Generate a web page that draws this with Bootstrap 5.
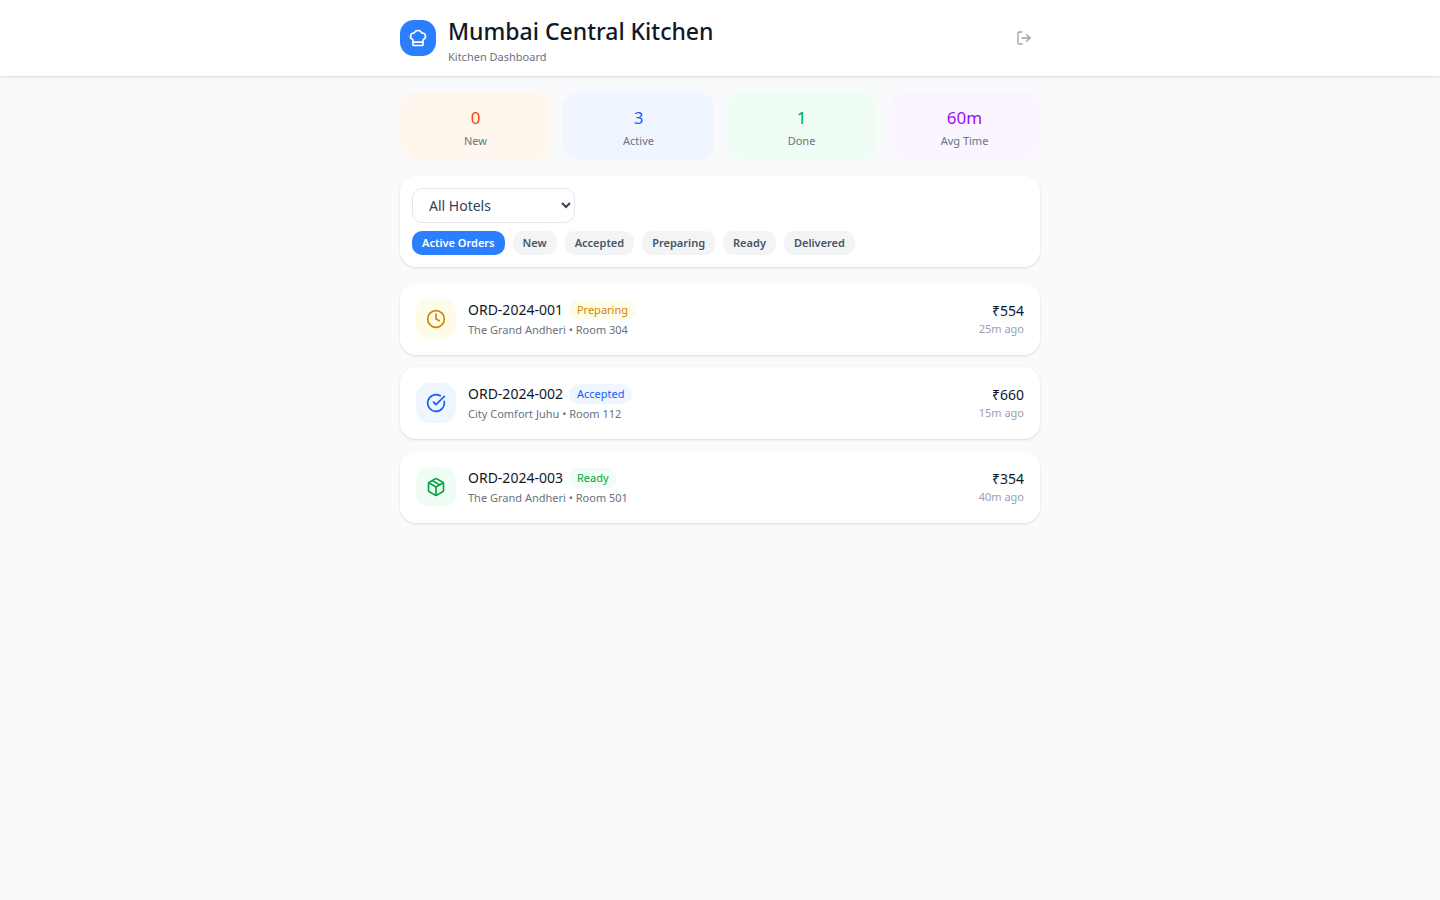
<!DOCTYPE html>
<html lang="en">
<head>
<meta charset="utf-8">
<meta name="viewport" content="width=device-width, initial-scale=1">
<title>Mumbai Central Kitchen</title>
<link href="https://cdn.jsdelivr.net/npm/bootstrap@5.3.0/dist/css/bootstrap.min.css" rel="stylesheet">
<style>
  body { background: #f9fafb; color: #101828; font-family: "Segoe UI", "Noto Sans", "Open Sans", sans-serif; font-size: 14px; line-height: 20px; }
  svg { fill: none; stroke: currentColor; stroke-width: 2; stroke-linecap: round; stroke-linejoin: round; display: block; }
  .wrap { max-width: 640px; }
  .soft-shadow { box-shadow: 0 1px 3px rgba(0,0,0,.1), 0 1px 2px -1px rgba(0,0,0,.1); }
  .top-row { padding: 11px 0; }
  .brand-tile { width: 36px; height: 36px; border-radius: 14px; background: #2b7fff; }
  .brand-text { padding-top: 2px; }
  .title { font-size: 23px; line-height: 36px; font-weight: 500; }
  .tiny { font-size: 11px; line-height: 16px; }
  .place { font-size: 11px; line-height: 16px; margin-top: 2px; }
  .muted { color: #6a7282; }
  .faint { color: #99a1af; }
  .gap-12 { gap: 12px; }
  .gap-6 { gap: 6px; }
  .pad-12 { padding: 12px; }
  .panel { background: #fff; border-radius: 16px; }
  .stat { border-radius: 16px; padding: 12px 12px 11px; }
  .stat-value { font-size: 17px; line-height: 28px; margin-bottom: 1px; }
  .orange { background: #fff7ed; color: #f54900; }
  .blue { background: #eff6ff; color: #155dfc; }
  .green { background: #f0fdf4; color: #00a63e; }
  .purple { background: #faf5ff; color: #9810fa; }
  .yellow { background: #fefce8; color: #d08700; }
  .hotel-select { width: 163px; height: 35px; padding: 0 0 0 12px; border: 1px solid #e5e7eb; border-radius: 10px; background: #fff; color: #364153; font-size: 14px; }
  .pill { border: 0; border-radius: 10px; padding: 4px 10px; font-size: 11px; line-height: 16px; font-weight: 600; background: #f3f4f6; color: #4a5565; }
  .pill.active { background: #2b7fff; color: #fff; }
  .order-tile { width: 40px; height: 40px; border-radius: 14px; }
  .status { border-radius: 10px; padding: 2px 8px; }
</style>
</head>
<body>
<header class="bg-white soft-shadow">
  <div class="wrap mx-auto d-flex align-items-center justify-content-between top-row">
    <div class="d-flex align-items-center gap-12">
      <div class="brand-tile d-flex align-items-center justify-content-center text-white">
        <svg width="20" height="20" viewBox="0 0 24 24"><path d="M17 21a1 1 0 0 0 1-1v-5.350c0-.457.316-.844.727-1.041a4 4 0 0 0-2.134-7.589 5 5 0 0 0-9.186 0 4 4 0 0 0-2.134 7.588c.411.198.727.585.727 1.041V20a1 1 0 0 0 1 1Z"/><path d="M6 17h12"/></svg>
      </div>
      <div class="brand-text">
        <h1 class="title mb-0">Mumbai Central Kitchen</h1>
        <p class="tiny muted mb-0">Kitchen Dashboard</p>
      </div>
    </div>
    <button type="button" class="btn border-0 p-2 faint" aria-label="Log out">
      <svg width="16" height="16" viewBox="0 0 24 24"><path d="m16 17 5-5-5-5"/><path d="M21 12H9"/><path d="M9 21H5a2 2 0 0 1-2-2V5a2 2 0 0 1 2-2h4"/></svg>
    </button>
  </div>
</header>

<main class="wrap mx-auto py-3 d-flex flex-column gap-3">
  <section class="d-flex gap-12 text-center">
    <div class="stat orange flex-fill w-25"><div class="stat-value">0</div><div class="tiny muted">New</div></div>
    <div class="stat blue flex-fill w-25"><div class="stat-value">3</div><div class="tiny muted">Active</div></div>
    <div class="stat green flex-fill w-25"><div class="stat-value">1</div><div class="tiny muted">Done</div></div>
    <div class="stat purple flex-fill w-25"><div class="stat-value">60m</div><div class="tiny muted">Avg Time</div></div>
  </section>

  <section class="panel soft-shadow pad-12 d-flex flex-column gap-2">
    <select class="hotel-select" aria-label="Hotel"><option>All Hotels</option><option>The Grand Andheri</option><option>City Comfort Juhu</option></select>
    <div class="d-flex flex-wrap gap-2">
      <button type="button" class="pill active">Active Orders</button>
      <button type="button" class="pill">New</button>
      <button type="button" class="pill">Accepted</button>
      <button type="button" class="pill">Preparing</button>
      <button type="button" class="pill">Ready</button>
      <button type="button" class="pill">Delivered</button>
    </div>
  </section>

  <section class="d-flex flex-column gap-12">
    <article class="panel soft-shadow p-3 d-flex align-items-center gap-12">
      <div class="order-tile yellow d-flex align-items-center justify-content-center">
        <svg width="20" height="20" viewBox="0 0 24 24"><circle cx="12" cy="12" r="10"/><path d="M12 6v6l4 2"/></svg>
      </div>
      <div class="flex-grow-1">
        <div class="d-flex align-items-center gap-6"><span>ORD-2024-001</span><span class="status tiny yellow">Preparing</span></div>
        <div class="place muted">The Grand Andheri • Room 304</div>
      </div>
      <div class="text-end"><div>₹554</div><div class="tiny faint">25m ago</div></div>
    </article>
    <article class="panel soft-shadow p-3 d-flex align-items-center gap-12">
      <div class="order-tile blue d-flex align-items-center justify-content-center">
        <svg width="20" height="20" viewBox="0 0 24 24"><path d="M21.801 10A10 10 0 1 1 17 3.335"/><path d="m9 11 3 3L22 4"/></svg>
      </div>
      <div class="flex-grow-1">
        <div class="d-flex align-items-center gap-6"><span>ORD-2024-002</span><span class="status tiny blue">Accepted</span></div>
        <div class="place muted">City Comfort Juhu • Room 112</div>
      </div>
      <div class="text-end"><div>₹660</div><div class="tiny faint">15m ago</div></div>
    </article>
    <article class="panel soft-shadow p-3 d-flex align-items-center gap-12">
      <div class="order-tile green d-flex align-items-center justify-content-center">
        <svg width="20" height="20" viewBox="0 0 24 24"><path d="M11 21.730a2 2 0 0 0 2 0l7-4A2 2 0 0 0 21 16V8a2 2 0 0 0-1-1.730l-7-4a2 2 0 0 0-2 0l-7 4A2 2 0 0 0 3 8v8a2 2 0 0 0 1 1.730z"/><path d="M12 22V12"/><path d="M3.290 7 12 12l8.710-5"/><path d="m7.500 4.270 9 5.150"/></svg>
      </div>
      <div class="flex-grow-1">
        <div class="d-flex align-items-center gap-6"><span>ORD-2024-003</span><span class="status tiny green">Ready</span></div>
        <div class="place muted">The Grand Andheri • Room 501</div>
      </div>
      <div class="text-end"><div>₹354</div><div class="tiny faint">40m ago</div></div>
    </article>
  </section>
</main>
<script src="https://cdn.jsdelivr.net/npm/bootstrap@5.3.0/dist/js/bootstrap.bundle.min.js"></script>
</body>
</html>
